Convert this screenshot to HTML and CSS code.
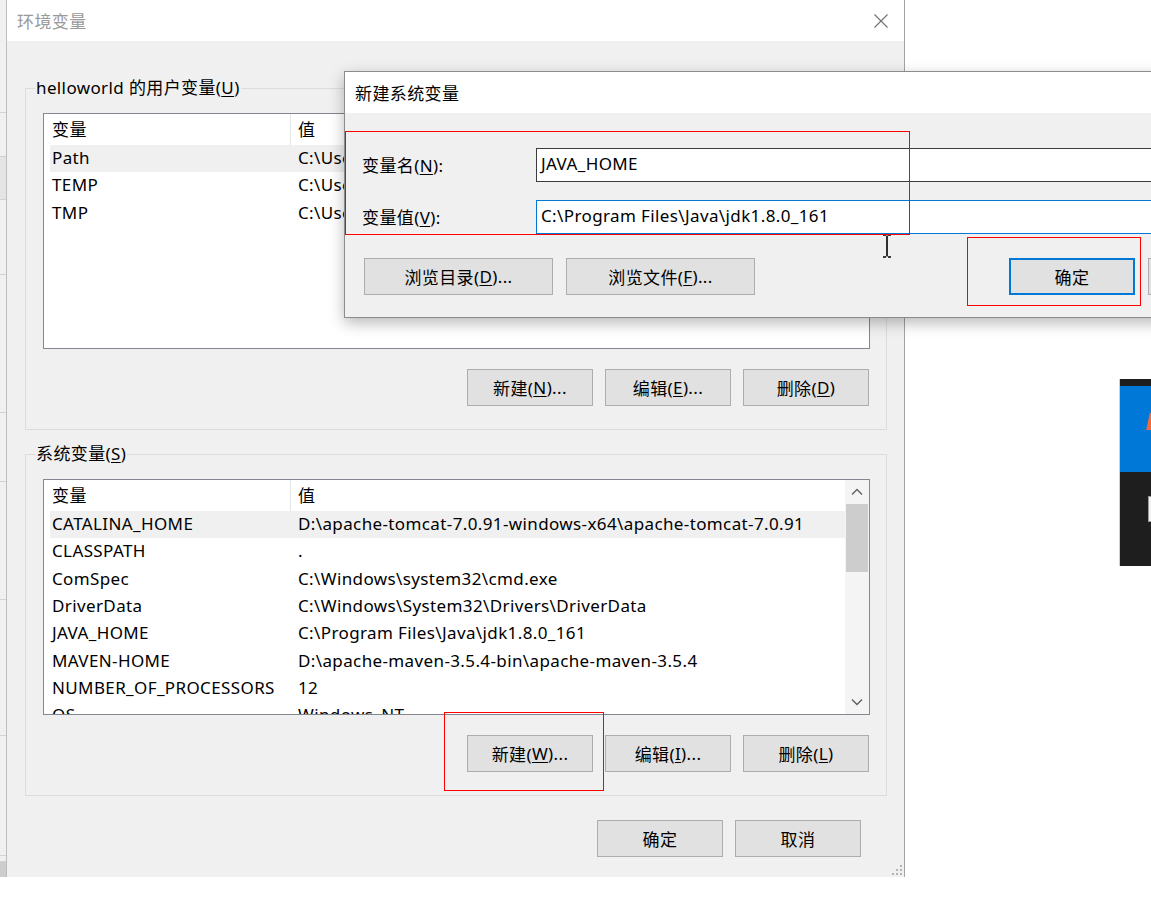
FILE: index.html
```html
<!DOCTYPE html>
<html lang="zh-CN">
<head>
<meta charset="utf-8">
<title>环境变量</title>
<link rel="stylesheet" href="styles.css">
</head>
<body>
<div class="desktop">
  <div class="bgwin">
    <div class="bs s1"></div>
    <div class="bs s2"></div>
    <div class="bs s3 block"></div>
    <div class="bs s4"></div>
    <div class="bs s5"></div>
    <div class="bs s6"></div>
    <div class="bs s7"></div>
    <div class="bs s8"></div>
    <div class="bs s9"></div>
    <div class="bs s10"></div>
    <div class="bs s11 block2"></div>
  </div>

  <section class="win main">
    <header class="titlebar">
      <span class="title dim">环境变量</span>
      <svg class="close" width="14" height="14" viewBox="0 0 14 14"><path d="M0.5 0.5 L13.5 13.5 M13.5 0.5 L0.5 13.5" stroke="#6f6f6f" stroke-width="1.1" fill="none"/></svg>
    </header>
    <div class="body">
      <div class="group g1">
        <div class="group-title">helloworld 的用户变量(<u>U</u>)</div>
        <div class="list">
          <div class="list-main">
            <div class="lhead"><span class="c1">变量</span><span class="c2">值</span></div>
            <div class="rows">
              <div class="row sel"><span class="c1">Path</span><span class="c2">C:\Users\helloworld\AppData\Local\Microsoft\WindowsApps;</span></div>
              <div class="row"><span class="c1">TEMP</span><span class="c2">C:\Users\helloworld\AppData\Local\Temp</span></div>
              <div class="row"><span class="c1">TMP</span><span class="c2">C:\Users\helloworld\AppData\Local\Temp</span></div>
            </div>
          </div>
        </div>
        <div class="btns">
          <div class="btn">新建(<u>N</u>)...</div>
          <div class="btn">编辑(<u>E</u>)...</div>
          <div class="btn">删除(<u>D</u>)</div>
        </div>
      </div>

      <div class="group g2">
        <div class="group-title">系统变量(<u>S</u>)</div>
        <div class="list">
          <div class="list-main">
            <div class="lhead"><span class="c1">变量</span><span class="c2">值</span></div>
            <div class="rows">
              <div class="row sel"><span class="c1">CATALINA_HOME</span><span class="c2">D:\apache-tomcat-7.0.91-windows-x64\apache-tomcat-7.0.91</span></div>
              <div class="row"><span class="c1">CLASSPATH</span><span class="c2">.</span></div>
              <div class="row"><span class="c1">ComSpec</span><span class="c2">C:\Windows\system32\cmd.exe</span></div>
              <div class="row"><span class="c1">DriverData</span><span class="c2">C:\Windows\System32\Drivers\DriverData</span></div>
              <div class="row"><span class="c1">JAVA_HOME</span><span class="c2">C:\Program Files\Java\jdk1.8.0_161</span></div>
              <div class="row"><span class="c1">MAVEN-HOME</span><span class="c2">D:\apache-maven-3.5.4-bin\apache-maven-3.5.4</span></div>
              <div class="row"><span class="c1">NUMBER_OF_PROCESSORS</span><span class="c2">12</span></div>
              <div class="row"><span class="c1">OS</span><span class="c2">Windows_NT</span></div>
            </div>
          </div>
          <div class="vscroll">
            <div class="sarrow"><svg width="12" height="8" viewBox="0 0 12 8"><path d="M1 6.5 L6 1.5 L11 6.5" stroke="#606060" stroke-width="1.4" fill="none"/></svg></div>
            <div class="thumb"></div>
            <div class="track"></div>
            <div class="sarrow"><svg width="12" height="8" viewBox="0 0 12 8"><path d="M1 1.5 L6 6.5 L11 1.5" stroke="#606060" stroke-width="1.4" fill="none"/></svg></div>
          </div>
        </div>
        <div class="btns">
          <div class="btn">新建(<u>W</u>)...</div>
          <div class="btn">编辑(<u>I</u>)...</div>
          <div class="btn">删除(<u>L</u>)</div>
        </div>
      </div>

      <div class="foot">
        <div class="btn">确定</div>
        <div class="btn">取消</div>
      </div>
      <svg class="grip" width="12" height="12" viewBox="0 0 12 12">
        <g fill="#b4b4b4">
          <rect x="9" y="1" width="2" height="2"/>
          <rect x="5" y="5" width="2" height="2"/><rect x="9" y="5" width="2" height="2"/>
          <rect x="1" y="9" width="2" height="2"/><rect x="5" y="9" width="2" height="2"/><rect x="9" y="9" width="2" height="2"/>
        </g>
      </svg>
    </div>
  </section>

  <section class="win newvar">
    <header class="nv-title">新建系统变量</header>
    <div class="nv-body">
      <div class="field">
        <label>变量名(<u>N</u>):</label>
        <div class="input">JAVA_HOME</div>
      </div>
      <div class="field">
        <label>变量值(<u>V</u>):</label>
        <div class="input focus">C:\Program Files\Java\jdk1.8.0_161</div>
      </div>
      <div class="nv-btns">
        <div class="btn wide">浏览目录(<u>D</u>)...</div>
        <div class="btn wide">浏览文件(<u>F</u>)...</div>
        <div class="spacer"></div>
        <div class="btn default">确定</div>
        <div class="btn">取消</div>
      </div>
    </div>
  </section>

  <div class="tile">
    <div class="tile-top"></div>
    <div class="tile-blue"><span class="tile-logo"></span></div>
    <div class="tile-dark"><span class="tile-box"></span></div>
  </div>

  <svg class="ibeam" width="10" height="24" viewBox="0 0 10 24">
    <path d="M1 1 H4 M6 1 H9 M5 1.5 V22.5 M1 23 H4 M6 23 H9" stroke="#000" stroke-width="1.6" fill="none"/>
  </svg>

  <div class="mark m1"></div>
  <div class="mark m2"></div>
  <div class="mark m3"></div>
</div>
</body>
</html>
```

FILE: styles.css
```css
* { box-sizing: border-box; }
html, body {
  margin: 0;
  padding: 0;
  overflow: hidden;
  background: #fff;
}
body {
  width: 1151px;
  height: 902px;
  font-family: "Noto Sans", "Noto Sans CJK SC", sans-serif;
  font-size: 17px;
  letter-spacing: 0.38px;
  color: #000;
}
u { text-decoration-thickness: 1px; text-underline-offset: 2px; }

.desktop {
  position: relative;
  width: 1151px;
  height: 902px;
  overflow: hidden;
  background: #fff;
}

/* background window strip at left */
.bgwin {
  position: absolute;
  left: 0;
  top: 0;
  width: 7px;
  height: 877px;
  background: #f0f0f0;
  display: flex;
  flex-direction: column;
}
.bs { border-bottom: 1px solid #d2d2d2; flex: none; }
.s1 { height: 113px; }
.s2 { height: 44px; }
.s3 { height: 43px; }
.block { background: #e4e4e4; }
.s4 { height: 75px; }
.s5 { height: 138px; }
.s6 { height: 69px; }
.s7 { height: 118px; }
.s8 { height: 136px; }
.s9 { height: 120px; }
.s10 { height: 6px; }
.s11 { flex: 1; border-bottom: 0; }
.block2 { background: #cdcdcd; }

/* main dialog */
.main {
  position: absolute;
  left: 6px;
  top: 0;
  width: 899px;
  height: 877px;
  background: #f0f0f0;
  border-left: 1px solid #bdbdbd;
  border-right: 1px solid #a3a3a3;
  display: flex;
  flex-direction: column;
}
.titlebar {
  height: 41px;
  flex: none;
  background: #fff;
  display: flex;
  align-items: center;
  justify-content: space-between;
  padding: 0 16px 0 10px;
}
.dim { color: #9a9a9a; }
.main .body {
  position: relative;
  flex: 1;
  padding: 47px 17px 0 18px;
  display: flex;
  flex-direction: column;
}
.group {
  border: 1px solid #dcdcdc;
  padding: 0 16px 23px 17px;
  display: flex;
  flex-direction: column;
}
.g2 { margin-top: 24px; }
.group-title {
  align-self: flex-start;
  margin: -13px 0 0 -8px;
  padding: 0 1px;
  height: 23px;
  line-height: 23px;
  background: #f0f0f0;
  white-space: nowrap;
}
.list {
  margin-top: 14px;
  height: 236px;
  background: #fff;
  border: 1px solid #828790;
  display: flex;
  overflow: hidden;
}
.list-main {
  flex: 1;
  min-width: 0;
  overflow: hidden;
}
.lhead {
  height: 31px;
  display: flex;
  align-items: stretch;
  white-space: nowrap;
}
.lhead .c1 {
  width: 247px;
  flex: none;
  padding: 1px 0 0 8px;
  line-height: 30px;
  border-right: 1px solid #e5e5e5;
}
.lhead .c2 {
  padding: 1px 0 0 7px;
  line-height: 30px;
}
.rows { padding-left: 6px; }
.row {
  height: 27.33px;
  display: flex;
  align-items: center;
  padding-bottom: 2px;
  white-space: nowrap;
}
.row.sel { background: #f0f0f0; }
.row .c1 { width: 240px; flex: none; padding-left: 2px; }
.row .c2 { padding-left: 8px; }

.vscroll {
  width: 24px;
  flex: none;
  background: #f4f4f4;
  display: flex;
  flex-direction: column;
}
.sarrow {
  height: 24px;
  flex: none;
  display: flex;
  align-items: center;
  justify-content: center;
}
.thumb {
  height: 68px;
  flex: none;
  margin: 0 1px;
  background: #cdcdcd;
}
.track { flex: 1; }

.btns {
  display: flex;
  justify-content: flex-end;
  gap: 12px;
  margin-top: 20px;
  margin-right: 1px;
}
.btn {
  width: 126px;
  height: 37px;
  flex: none;
  border: 1px solid #adadad;
  background: #e1e1e1;
  display: flex;
  align-items: center;
  justify-content: center;
  padding-bottom: 1px;
  white-space: nowrap;
}
.foot {
  display: flex;
  justify-content: flex-end;
  gap: 12px;
  margin-top: 24px;
  padding-right: 26px;
}
.grip {
  position: absolute;
  right: 1px;
  bottom: 1px;
}

/* new variable dialog */
.newvar {
  position: absolute;
  left: 344px;
  top: 71px;
  width: 948px;
  background: #f0f0f0;
  border: 1px solid #8c8c8c;
  box-shadow: 0 5px 14px rgba(0, 0, 0, 0.28);
}
.nv-title {
  height: 41px;
  background: #fff;
  display: flex;
  align-items: center;
  padding-left: 10px;
}
.nv-body {
  padding: 35px 17px 22px 17px;
}
.field {
  display: flex;
  align-items: center;
}
.field + .field { margin-top: 18px; }
.field label {
  width: 174px;
  flex: none;
  padding-bottom: 1px;
}
.input {
  flex: 1;
  height: 34px;
  background: #fff;
  border: 1px solid #3c3c3c;
  display: flex;
  align-items: center;
  padding: 0 0 3px 4px;
  white-space: nowrap;
}
.input.focus { border-color: #0078d7; }
.nv-btns {
  display: flex;
  gap: 13px;
  margin-top: 24px;
  padding-left: 2px;
}
.btn.wide { width: 189px; }
.spacer { flex: 1; }
.btn.default { border: 2px solid #0078d7; }

/* partial tile at the right edge */
.tile {
  position: absolute;
  left: 1119px;
  top: 379px;
  width: 40px;
  height: 187px;
  background: #1e1e1e;
  border-left: 1px solid #cfcfcf;
  display: flex;
  flex-direction: column;
}
.tile-top { height: 7px; flex: none; }
.tile-blue {
  height: 86px;
  flex: none;
  background: #0078d7;
  padding: 27px 0 0 28px;
}
.tile-logo {
  display: block;
  width: 10px;
  height: 17px;
  background: #f26b3a;
  transform: skewX(-12deg);
}
.tile-dark {
  flex: 1;
  padding: 24px 0 0 28px;
}
.tile-box {
  display: block;
  width: 10px;
  height: 26px;
  background: #f2f2f2;
  border: 1px solid #999;
}

.ibeam {
  position: absolute;
  left: 882px;
  top: 234px;
}

/* red annotation boxes */
.mark {
  position: absolute;
  border: 1px solid #ff0000;
}
.m1 { left: 345px; top: 131px; width: 565px; height: 104px; }
.m2 { left: 967px; top: 237px; width: 174px; height: 69px; }
.m3 { left: 444px; top: 712px; width: 160px; height: 79px; }
```
